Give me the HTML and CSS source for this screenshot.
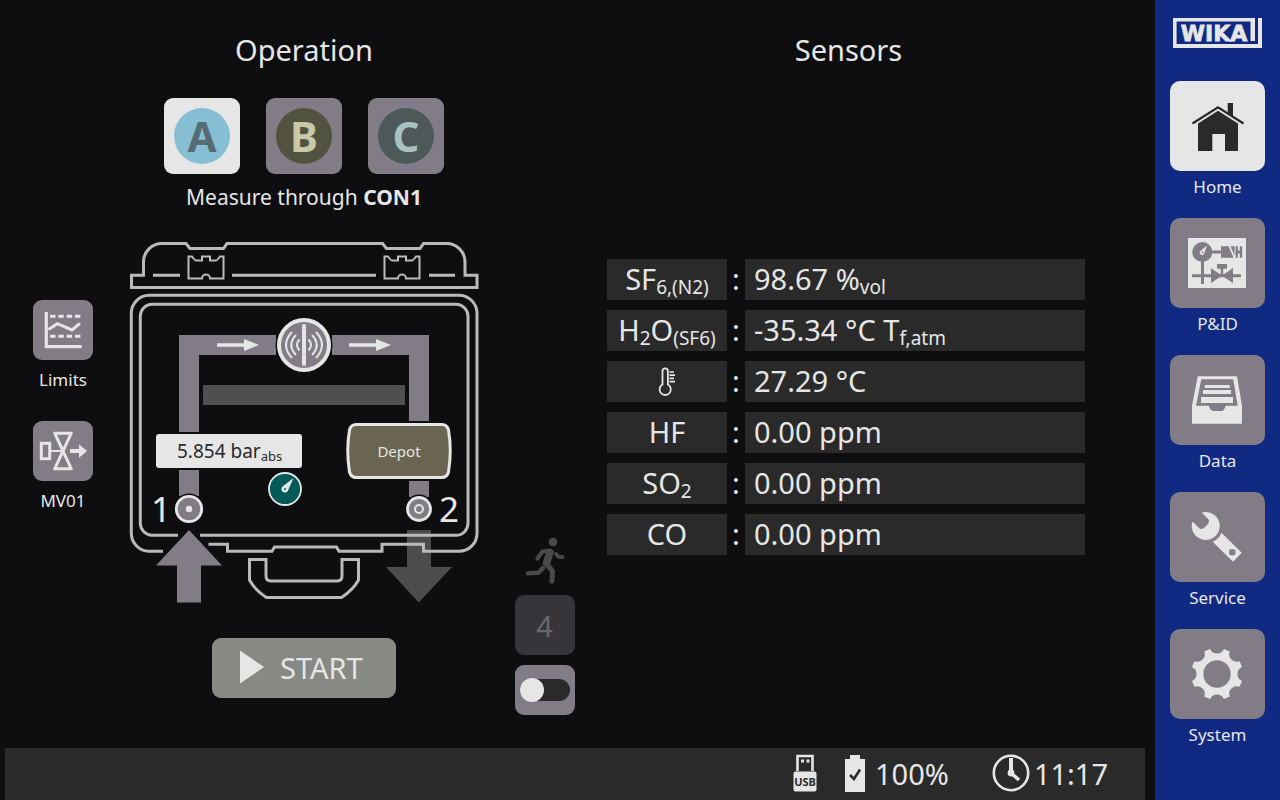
FILE: index.html
```
<!DOCTYPE html>
<html lang="en">
<head>
  <meta charset="UTF-8">
  <meta name="viewport" content="width=device-width, initial-scale=1.0">
  <title>WIKA - Home</title>
  <link rel="stylesheet" href="styles.css">
</head>
<body>
  <div class="screen">
    <main class="panels">
      <!-- Shortcuts left of the case -->
      <div class="shortcuts">
        <div class="shortcut">
          <button class="tile" id="limits" aria-labelledby="limits-label">
            <svg viewBox="0 0 60 60" fill="none" stroke="#e6e6e6" stroke-width="3.2">
              <path d="M13.3 12V46.7H48.7"/>
              <path d="M17 16.3H48M17 36.3H48" stroke-dasharray="5.5 2.8" stroke-width="3"/>
              <path d="M15.5 29.5L24.3 23.7L39 30L47 23.3" stroke-width="3"/>
            </svg>
          </button>
          <label for="limits" id="limits-label">Limits</label>
        </div>
        <div class="shortcut">
          <button class="tile" id="mv01" aria-labelledby="mv01-label">
            <svg viewBox="0 0 60 60" fill="none" stroke="#e6e6e6" stroke-width="3">
              <rect x="8.3" y="22.3" width="8.4" height="15.4"/>
              <path d="M18 30H30" stroke-width="2"/>
              <path d="M21.7 12.2H38.3L21.7 47.8H38.3Z" stroke-linejoin="round"/>
              <path d="M37 30H47" stroke-width="4"/>
              <path d="M46 23.3L54 30L46 36.7Z" fill="#e6e6e6" stroke="none"/>
            </svg>
          </button>
          <label for="mv01" id="mv01-label">MV01</label>
        </div>
      </div>

      <!-- Operation -->
      <section class="operation">
        <h1>Operation</h1>
        <div class="modes">
          <button class="mode active"><span class="dot dot-a">A</span></button>
          <button class="mode"><span class="dot dot-b">B</span></button>
          <button class="mode"><span class="dot dot-c">C</span></button>
        </div>
        <p class="caption">Measure through <b>CON1</b></p>

        <svg class="case" viewBox="126 238 356 368">
          <!-- outlet arrow, under the outline -->
          <path d="M407 530H431V567H452L418.7 602.5L386 567H407Z" fill="#4c4c4c"/>
          <g fill="none" stroke="#b9bab9" stroke-width="3">
            <!-- lid -->
            <path d="M131.5 275.3H143.5V262A18.5 18.5 0 0 1 162 243.5H186L190 248.5H223.5L227 243.5H382.5L386.5 248.5H420L423.5 243.5H446.5A18.5 18.5 0 0 1 465 262V275.3H477V287.5H131.5Z"/>
            <path d="M153 275.3H180M232 275.3H376M429 275.3H455"/>
            <!-- body -->
            <path d="M163 551.3H149A18 18 0 0 1 131.3 533V313A18 18 0 0 1 149 295.3H459A18 18 0 0 1 477 313V533A18 18 0 0 1 459 551.3H423.5V544.3H382V551.3H339L336.5 547H274.5L272 551.3H227.5V544.3H208.5"/>
            <path d="M178 535.3H152A12 12 0 0 1 140.3 523V316A12 12 0 0 1 152 304.3H456A12 12 0 0 1 468 316V523A12 12 0 0 1 456 535.3H200"/>
            <!-- handle -->
            <path d="M249.5 559.5H266V576Q266 581 271 581H337Q342 581 342 576V559.5H358.5V580Q353 590 341.5 597.5H266.5Q255 590 249.5 580Z"/>
          </g>
          <!-- latches -->
          <g fill="none" stroke="#b9bab9" stroke-width="2">
            <path id="latch" d="M188.5 256.5H192Q195 260.5 196 260.5H202V256.5H210V260.5H216Q217 260.5 220 256.5H223.5V278.5H210A4 4 0 0 0 202 278.5H188.5Z"/>
            <use href="#latch" x="196"/>
          </g>

          <!-- gas path -->
          <g fill="#827c87">
            <path d="M179 432V335H276V355H199V432Z"/>
            <path d="M332 335H429V421H409V355H332Z"/>
            <path d="M179 470H199V496H179ZM409 481H429V497H409Z"/>
            <path d="M189 530L222 565.5H201V602.5H177V565.5H156Z"/>
          </g>
          <rect x="203" y="385" width="202" height="20" fill="#504e50"/>
          <g fill="#e6e6e6">
            <path d="M217 343.3H244V339L259 345L244 351V346.7H217Z"/>
            <path d="M349 343.3H376V339L391 345L376 351V346.7H349Z"/>
          </g>

          <!-- sensor head -->
          <circle cx="304" cy="345" r="28.5" fill="#0e0e10"/>
          <circle cx="304" cy="345" r="25" fill="#827c87" stroke="#e6e6e6" stroke-width="4"/>
          <path d="M304 326V364" stroke="#e6e6e6" stroke-width="4" stroke-linecap="round"/>
          <g id="waves" fill="none" stroke="#e6e6e6" stroke-width="2">
            <path d="M299.5 339.5Q294.5 345 299.5 350.5"/>
            <path d="M296 335Q286.5 345 296 355"/>
            <path d="M292 332Q280 345 292 358"/>
          </g>
          <use href="#waves" transform="matrix(-1 0 0 1 608 0)"/>

          <!-- pressure -->
          <rect x="156" y="434" width="146" height="34" rx="3" fill="#e6e6e6"/>
          <text class="pressure" x="177" y="458">5.854 bar<tspan class="unit" dy="3">abs</tspan></text>
          <circle cx="285" cy="489" r="16" fill="#005a58" stroke="#e6e6e6" stroke-width="1.8"/>
          <path d="M293.5 478L288.3 490A3.5 3.5 0 1 1 282.5 486.5Z" fill="#e6e6e6"/>
          <circle cx="285" cy="489" r="1" fill="#005a58"/>

          <!-- depot -->
          <path d="M356 424.5H442Q447 424.5 448.5 430Q452 450 448.5 472Q447 477.5 442 477.5H356Q351 477.5 349.5 472Q346 450 349.5 430Q351 424.5 356 424.5Z" fill="#6a6550" stroke="#e6e6e6" stroke-width="3"/>
          <text class="depot" x="399" y="457">Depot</text>

          <!-- connectors -->
          <circle cx="189" cy="509" r="15.5" fill="#0e0e10"/>
          <circle cx="189" cy="509" r="12.7" fill="#827c87" stroke="#e6e6e6" stroke-width="2.8"/>
          <circle cx="189" cy="509" r="3.2" fill="#e6e6e6"/>
          <circle cx="419" cy="509" r="14.5" fill="#0e0e10"/>
          <circle cx="419" cy="509" r="11.5" fill="#827c87" stroke="#e6e6e6" stroke-width="2.8"/>
          <circle cx="419" cy="509" r="4" fill="none" stroke="#e6e6e6" stroke-width="2"/>
          <text class="port" x="161" y="522">1</text>
          <text class="port" x="449" y="522">2</text>
        </svg>

        <button class="start">
          <svg viewBox="0 0 24 34"><path d="M0 0.500L24 17L0 33.500Z" fill="#e6e6e6"/></svg>
          START
        </button>
      </section>

      <!-- Flow -->
      <div class="flow">
        <svg class="runner" viewBox="0 0 40 48" fill="none" stroke="#49494a" stroke-linecap="round" stroke-linejoin="round">
          <circle cx="28" cy="5" r="4.3" fill="#49494a" stroke="none"/>
          <path d="M12.5 21.5L17.5 14.5L25 13.5" stroke-width="4.2"/>
          <path d="M25 15.5L21.5 26" stroke-width="7.5"/>
          <path d="M21.5 27L27.5 34L27 44" stroke-width="5"/>
          <path d="M3 36.3L13.5 35.7L18 31" stroke-width="4.6"/>
          <path d="M31 17L33.5 19.7L37.5 20" stroke-width="4"/>
        </svg>
        <button class="tile step" disabled>4</button>
        <label class="toggle">
          <input type="checkbox" aria-label="Fast flow">
        </label>
      </div>

      <!-- Sensors -->
      <section class="sensors">
        <h1>Sensors</h1>
        <table>
          <tr><th>SF<sub>6,(N2)</sub></th><td class="colon">:</td><td>98.67 %<sub>vol</sub></td></tr>
          <tr><th>H<sub>2</sub>O<sub>(SF6)</sub></th><td class="colon">:</td><td>-35.34 °C T<sub>f,atm</sub></td></tr>
          <tr>
            <th>
              <svg class="thermometer" viewBox="0 0 18 30" fill="none" stroke="#e6e6e6" stroke-width="1.8">
                <path d="M4.500 17.500V4A2.700 2.700 0 0 1 9.900 4V17.500A5.600 5.600 0 1 1 4.500 17.500Z"/>
                <path d="M11.500 5H16M11.500 8.200H17M11.500 11.400H16M11.500 14.600H17" stroke-width="1.7"/>
              </svg>
            </th>
            <td class="colon">:</td><td>27.29 °C</td>
          </tr>
          <tr><th>HF</th><td class="colon">:</td><td>0.00 ppm</td></tr>
          <tr><th>SO<sub>2</sub></th><td class="colon">:</td><td>0.00 ppm</td></tr>
          <tr><th>CO</th><td class="colon">:</td><td>0.00 ppm</td></tr>
        </table>
      </section>
    </main>

    <footer class="status">
      <svg class="usb" viewBox="0 0 24 38">
        <path d="M4.5 17V2H19.5V17" fill="none" stroke="#e6e6e6" stroke-width="2.6"/>
        <path d="M8 5.500H11V8.500H8ZM13.5 5.500H16.5V8.500H13.5Z" fill="#e6e6e6"/>
        <rect x="0.5" y="17.5" width="23" height="20" rx="2" fill="#e6e6e6"/>
        <text x="12" y="32">USB</text>
      </svg>
      <div class="battery">
        <svg viewBox="0 0 20 37">
          <path d="M5 0H15V4H20V37H0V4H5Z" fill="#e6e6e6"/>
          <path d="M5 20L9 24L15 14.5" fill="none" stroke="#2a2a2a" stroke-width="2.6"/>
        </svg>
        <span>100%</span>
      </div>
      <div class="clock">
        <svg viewBox="0 0 38 38" fill="none" stroke="#e6e6e6">
          <circle cx="19" cy="19" r="17.2" stroke-width="2.6"/>
          <path d="M19 4V19" stroke-width="4"/>
          <path d="M19 19L27 26" stroke-width="3.6"/>
          <circle cx="19" cy="19" r="3.4" fill="#e6e6e6" stroke="none"/>
        </svg>
        <time>11:17</time>
      </div>
    </footer>
  </div>

  <nav class="sidebar">
    <svg class="logo" viewBox="0 0 89 30" fill="#e6e6e6">
      <path d="M0 0H82V23H77.5V3.6H3.6V26H85V0H89V30H0Z"/>
      <text x="41" y="23">WIKA</text>
    </svg>

    <a href="#home" class="nav-item active">
      <span class="icon">
        <svg viewBox="0 0 95 90" fill="#2a2a2a">
          <path d="M22.5 42.5L48 26.3L73.5 42.5" fill="none" stroke="#2a2a2a" stroke-width="2.2"/>
          <path d="M57.7 22H63V36L57.7 32.5Z"/>
          <path d="M28 42.5L48 29.7L68 42.5V70H55V53H42.3V70H28Z"/>
        </svg>
      </span>
      Home
    </a>
    <a href="#pid" class="nav-item">
      <span class="icon">
        <svg viewBox="0 0 95 90" fill="#827c87">
          <rect x="18" y="20" width="58" height="50" fill="#e6e6e6"/>
          <circle cx="32.3" cy="34" r="10"/>
          <path d="M31 42H34V66H31ZM42 32.6H51V35.4H42ZM22 56.3H71V59.2H22Z"/>
          <path d="M51 28.3H58.5L63.5 39.7H51Z"/>
          <path d="M60.5 28.3H64.5V37.5Z"/>
          <path d="M65.5 28.3H67.8V32.6H69.8V28.3H72.2V39.7H69.8V35.4H67.8V39.7H65.5Z"/>
          <path d="M41 50L52 57.7L63 50V65L52 57.7L41 65ZM47 46H57V50.7H53.2V57H50.8V50.7H47Z"/>
          <path d="M37 27.5L34.5 34.5A2.4 2.4 0 1 1 31 32.5Z" fill="#e6e6e6"/>
          <circle cx="32.5" cy="34.5" r="0.9"/>
        </svg>
      </span>
      P&amp;ID
    </a>
    <a href="#data" class="nav-item">
      <span class="icon">
        <svg viewBox="0 0 95 90" fill="#e6e6e6">
          <path fill-rule="evenodd" d="M27.7 21.3H67L72 50.7V68.7H22V50.7ZM31.3 24.3L26 50.7H38.7Q40.5 56 43.5 56H51.5Q54 56 55.7 50.7H67.7L63.3 24.3Z"/>
          <path d="M35 30H59.5L60 33H34.5ZM33 35H61V39H33ZM31 42H63V48H31Z"/>
        </svg>
      </span>
      Data
    </a>
    <a href="#service" class="nav-item">
      <span class="icon">
        <svg viewBox="0 0 95 90" fill="#e6e6e6">
          <path d="M31.7 20.6A14 14 0 1 1 22.5 29.5L29 36Q31.5 38 34 36L38 32Q40 29 38 27Z"/>
          <path fill-rule="evenodd" d="M51.5 40.7L71.7 60.7L63 69.7L42.7 49.7Q49 47 51.5 40.7ZM62.3 57A3.3 3.3 0 1 0 62.3 63.6A3.3 3.3 0 1 0 62.3 57Z"/>
        </svg>
      </span>
      Service
    </a>
    <a href="#system" class="nav-item">
      <span class="icon">
        <svg viewBox="-47 -45 95 90" fill="#e6e6e6">
          <path d="M6.9 -25L12.8 -22.6A7.5 7.5 0 0 0 22.6 -12.8L25 -6.9A7.5 7.5 0 0 0 25 6.9L22.6 12.8A7.5 7.5 0 0 0 12.8 22.6L6.9 25A7.5 7.5 0 0 0 -6.9 25L-12.8 22.6A7.5 7.5 0 0 0 -22.6 12.8L-25 6.9A7.5 7.5 0 0 0 -25 -6.9L-22.6 -12.8A7.5 7.5 0 0 0 -12.8 -22.6L-6.9 -25A7.5 7.5 0 0 0 6.9 -25Z"/>
          <circle r="13.7" fill="#827c87"/>
        </svg>
      </span>
      System
    </a>
  </nav>
</body>
</html>
```
FILE: styles.css
```
* {
  margin: 0;
  padding: 0;
  box-sizing: border-box;
}

body {
  display: flex;
  min-height: 100vh;
  font-family: "Noto Sans", "Open Sans", sans-serif;
  font-size: 17px;
  background-color: #0e0e10;
  color: #e6e6e6;
}

button {
  font-family: inherit;
  color: inherit;
  border: none;
  cursor: pointer;
}

svg {
  display: block;
}

h1 {
  font-size: 29px;
  font-weight: normal;
  line-height: 40px;
  text-align: center;
}

.screen {
  flex: 1;
  display: flex;
  flex-direction: column;
}

.panels {
  flex: 1;
  display: grid;
  grid-template-columns: 126px 356px 125px 1fr;
  padding-right: 70px;
}

/* Shortcuts */
.shortcuts {
  display: flex;
  flex-direction: column;
  align-items: center;
  gap: 26px;
  padding-top: 300px;
}

.shortcut {
  display: flex;
  flex-direction: column;
  align-items: center;
  gap: 5px;
  line-height: 30px;
}

.tile {
  width: 60px;
  height: 60px;
  border-radius: 9px;
  background-color: #827c87;
}

/* Operation */
.operation {
  display: flex;
  flex-direction: column;
  align-items: center;
  padding-top: 30px;
}

.modes {
  display: flex;
  gap: 26px;
  margin-top: 28px;
}

.mode {
  display: flex;
  align-items: center;
  justify-content: center;
  width: 76px;
  height: 76px;
  border-radius: 9px;
  background-color: #827c87;
}

.mode.active {
  background-color: #e6e6e6;
}

.dot {
  width: 56px;
  height: 56px;
  border-radius: 50%;
  font-size: 42px;
  font-weight: bold;
  line-height: 56px;
}

.dot-a {
  background-color: #86bfd4;
  color: #566b73;
}

.dot-b {
  background-color: #525241;
  color: #c9c9a8;
}

.dot-c {
  background-color: #4d5859;
  color: #aac0c2;
}

.caption {
  margin-top: 8px;
  font-size: 21px;
  line-height: 30px;
}

.case {
  width: 100%;
  margin-top: 26px;
}

.pressure {
  font-size: 19px;
  fill: #2a2a2a;
}

.pressure .unit {
  font-size: 13px;
}

.depot {
  font-size: 15px;
  fill: #e6e6e6;
  text-anchor: middle;
}

.port {
  font-size: 35px;
  fill: #e6e6e6;
  text-anchor: middle;
}

.start {
  display: flex;
  align-items: center;
  gap: 16px;
  width: 184px;
  height: 60px;
  margin-top: 32px;
  padding: 0 0 2px 28px;
  border-radius: 9px;
  background-color: #878a84;
  font-size: 29px;
}

.start svg {
  width: 24px;
}

/* Flow */
.flow {
  display: flex;
  flex-direction: column;
  align-items: center;
  justify-content: flex-end;
  gap: 10px;
  padding-bottom: 33px;
}

.runner {
  width: 40px;
}

.step {
  background-color: #37353a;
  color: #68676b;
  font-size: 29px;
}

.toggle {
  display: flex;
  align-items: center;
  justify-content: center;
  width: 60px;
  height: 50px;
  border-radius: 9px;
  background-color: #827c87;
}

.toggle input {
  appearance: none;
  display: flex;
  align-items: center;
  width: 50px;
  height: 22px;
  border-radius: 11px;
  background-color: #2a2a2a;
}

.toggle input::before {
  content: "";
  width: 24px;
  height: 24px;
  flex-shrink: 0;
  border-radius: 50%;
  background-color: #e6e6e6;
}

.toggle input:checked {
  justify-content: flex-end;
}

/* Sensors */
.sensors {
  padding-top: 30px;
}

.sensors h1 {
  padding-left: 5px;
}

.sensors table {
  width: 100%;
  margin-top: 179px;
  table-layout: fixed;
  border-spacing: 0 10px;
  font-size: 29px;
  line-height: 39px;
}

.sensors th {
  width: 120px;
  height: 41px;
  padding-bottom: 2px;
  font-weight: normal;
  background-color: #2a2a2a;
}

.sensors td {
  padding: 0 0 2px 9px;
  background-color: #2a2a2a;
}

.sensors .colon {
  width: 18px;
  padding-left: 0;
  text-align: center;
  background: none;
}

.sensors sub {
  font-size: 19px;
  line-height: 0;
  vertical-align: -4px;
}

.thermometer {
  width: 18px;
  margin: 2px auto 0;
}

/* Status bar */
.status {
  display: flex;
  align-items: center;
  justify-content: flex-end;
  height: 52px;
  margin: 0 10px 0 5px;
  padding: 0 37px 2px 0;
  background-color: #2a2a2a;
  font-size: 29px;
}

.usb {
  width: 24px;
  margin-right: 28px;
}

.usb text {
  font-size: 11px;
  font-weight: bold;
  fill: #2a2a2a;
  text-anchor: middle;
}

.battery, .clock {
  display: flex;
  align-items: center;
}

.battery {
  gap: 10px;
  margin-right: 43px;
}

.battery svg {
  width: 20px;
}

.clock {
  gap: 4px;
}

.clock svg {
  width: 38px;
}

/* Sidebar */
.sidebar {
  display: flex;
  flex-direction: column;
  align-items: center;
  gap: 16px;
  width: 125px;
  padding-top: 18px;
  background-color: #102a83;
}

.logo {
  width: 89px;
  margin-bottom: 17px;
}

.logo text {
  font-family: "DejaVu Sans", sans-serif;
  font-size: 22px;
  font-weight: bold;
  text-anchor: middle;
  stroke: #e6e6e6;
  stroke-width: 0.8px;
}

.nav-item {
  color: #e6e6e6;
  line-height: 31px;
  text-align: center;
  text-decoration: none;
}

.icon {
  display: block;
  width: 95px;
  height: 90px;
  border-radius: 10px;
  background-color: #827c87;
}

.nav-item.active .icon {
  background-color: #e6e6e6;
}
```
